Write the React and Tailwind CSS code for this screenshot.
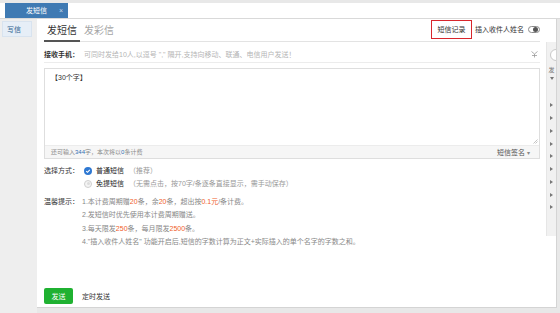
export default function App() {
  const tris = [0, 1, 2, 3, 4, 5, 6, 7, 8];
  return (
    <div className="w-[560px] h-[313px] bg-[#e8e8e8] flex flex-col overflow-hidden font-['Liberation_Sans','Noto_Sans_CJK_SC',sans-serif] text-[#333]">
      <div className="h-[3px] shrink-0" />
      <div className="h-[16px] shrink-0 bg-white flex border-b border-[#d9d9d9]">
        <div className="ml-[5px] w-[63px] bg-[#3f7ab3] flex items-center text-white text-[7px] leading-none">
          <span className="ml-[21px]">发短信</span>
          <span className="ml-[12px] text-[#c6d8ec] text-[7px]">×</span>
        </div>
      </div>
      <div className="flex-1 flex min-h-0">
        <div className="w-[37px] shrink-0 bg-[#eeeeee] pt-[2px] pl-[2px]">
          <div className="w-[30px] h-[16px] bg-[#e6eef7] border border-[#d8e3ef] flex items-center pl-[4px] text-[7px] text-[#2d5e8e] leading-none">写信</div>
        </div>
        <div className="flex-1 flex bg-white border-r border-b border-[#d4d4d4] mb-[5px] mr-[3px] min-w-0">
          <div className="flex-1 flex flex-col pl-[7px] pr-[6px] min-w-0">
            {/* header */}
            <div className="h-[23px] shrink-0 flex justify-between border-b border-[#e3e3e3]">
              <div className="flex items-end">
                <div className="px-[3px] pb-[4px] border-b-2 border-[#555] text-[10px] leading-none text-[#333] -mb-[1px]">发短信</div>
                <div className="ml-[4px] pb-[5px] text-[10px] leading-none text-[#a5a5a5]">发彩信</div>
              </div>
              <div className="flex items-start pt-[1px]">
                <div className="w-[41px] h-[19px] border border-[#d8262c] flex items-center justify-center text-[7px] leading-none text-[#333]">短信记录</div>
                <div className="ml-[3px] h-[19px] flex items-center text-[7px] leading-none text-[#333]">插入收件人姓名</div>
                <div className="ml-[4px] h-[19px] flex items-center">
                  <div className="w-[12px] h-[7px] rounded-full border border-[#8a8a8a] flex items-center justify-end pr-[1px]">
                    <div className="w-[5px] h-[5px] rounded-full bg-[#555]" />
                  </div>
                </div>
              </div>
            </div>
            {/* receiver */}
            <div className="mt-[5px] h-[16px] shrink-0 flex items-center border-b border-[#ececec]">
              <span className="text-[7px] font-bold leading-none text-[#333]">接收手机：</span>
              <span className="ml-[5px] text-[7px] leading-none text-[#b5b5b5]">可同时发给10人,以逗号 "," 隔开,支持向移动、联通、电信用户发送！</span>
              <div className="ml-auto mr-[2px]">
                <svg width="7" height="7" viewBox="0 0 7 7" fill="none" stroke="#9a9a9a" strokeWidth="0.8">
                  <path d="M0.5 0.5 L3.5 3 L6.5 0.5" />
                  <path d="M3.5 3 V6.5" />
                  <path d="M1 4.5 H6" />
                </svg>
              </div>
            </div>
            {/* textarea */}
            <div className="mt-[5px] h-[91px] shrink-0 border border-[#dedede] flex flex-col">
              <div className="flex-1 relative px-[6px] pt-[5px] text-[7px] leading-none text-[#333]">
                【30个字】
                <svg className="absolute right-[1px] bottom-[1px]" width="5" height="5" viewBox="0 0 5 5" stroke="#aaa" strokeWidth="0.7">
                  <path d="M0.5 4.5 L4.5 0.5 M2.5 4.5 L4.5 2.5" />
                </svg>
              </div>
              <div className="h-[13px] bg-[#f6f6f6] border-t border-[#ececec] flex items-center justify-between pl-[6px] pr-[9px]">
                <span className="text-[6px] leading-none text-[#8a8a8a]">还可输入<span className="text-[#2f6fb3]">344</span>字，本次将以<span className="text-[#2f6fb3]">0</span>条计费</span>
                <span className="text-[7px] leading-none text-[#555]">短信签名 <span className="text-[#888] text-[6px]">▾</span></span>
              </div>
            </div>
            {/* select */}
            <div className="mt-[5px] flex shrink-0">
              <div className="w-[40px] h-[13px] flex items-center text-[7px] leading-none text-[#333]">选择方式：</div>
              <div className="flex flex-col">
                <div className="h-[13px] flex items-center">
                  <div className="w-[8px] h-[8px] rounded-full bg-[#2e78d2] flex items-center justify-center">
                    <svg width="6" height="6" viewBox="0 0 6 6" fill="none" stroke="white" strokeWidth="1.1">
                      <path d="M1.2 3.1 L2.5 4.3 L4.8 1.8" />
                    </svg>
                  </div>
                  <span className="ml-[4px] text-[7px] leading-none text-[#222]">普通短信</span>
                  <span className="ml-[5px] text-[7px] leading-none text-[#999]">（推荐）</span>
                </div>
                <div className="h-[13px] flex items-center">
                  <div className="w-[8px] h-[8px] rounded-full border border-[#d0d0d0] bg-[#f4f4f4] flex items-center justify-center">
                    <div className="w-[3px] h-[3px] rounded-full bg-[#dcdcdc]" />
                  </div>
                  <span className="ml-[4px] text-[7px] leading-none text-[#222]">免提短信</span>
                  <span className="ml-[5px] text-[7px] leading-none text-[#999]">（无需点击，按70字/条逐条直接显示，需手动保存）</span>
                </div>
              </div>
            </div>
            {/* tips */}
            <div className="mt-[5px] flex shrink-0 text-[7px] leading-[13.3px]">
              <div className="w-[38px] text-[#333]">温馨提示：</div>
              <div className="flex flex-col text-[#888]">
                <div>1.本计费周期赠<span className="text-[#f0602a]">20</span>条，余<span className="text-[#f0602a]">20</span>条，超出按<span className="text-[#f0602a]">0.1元</span>/条计费。</div>
                <div>2.发短信时优先使用本计费周期赠送。</div>
                <div>3.每天限发<span className="text-[#f0602a]">250</span>条，每月限发<span className="text-[#f0602a]">2500</span>条。</div>
                <div>4."插入收件人姓名" 功能开启后,短信的字数计算为正文+实际插入的单个名字的字数之和。</div>
              </div>
            </div>
            <div className="flex-1" />
            <div className="flex items-center mb-[3px] shrink-0">
              <div className="w-[29px] h-[16px] bg-[#1fb131] rounded-[2px] flex items-center justify-center text-white text-[7px] leading-none">发送</div>
              <span className="ml-[9px] text-[7px] leading-none text-[#333]">定时发送</span>
            </div>
          </div>
          {/* right strip */}
          <div className="w-[10px] shrink-0 flex flex-col">
            <div className="h-[23px]" />
            <div className="h-[194px] bg-[#f1f1f1] border-l border-[#e6e6e6] overflow-hidden flex flex-col items-center">
              <div className="mt-[7px] ml-[8px] w-[12px] h-[12px] shrink-0 rounded-full border border-[#c8c8c8] bg-white" />
              <div className="mt-[6px] text-[6px] leading-none text-[#777]">发</div>
              <svg className="mt-[4px]" width="4" height="3" viewBox="0 0 4 3">
                <path d="M0 0 H4 L2 3 Z" fill="#777" />
              </svg>
              <div className="mt-[19px] flex flex-col items-center">
                {tris.map((i) => (
                  <div key={i} className="h-[12.75px] flex items-center">
                    <svg width="3" height="4" viewBox="0 0 3 4">
                      <path d="M0 0 L3 2 L0 4 Z" fill="#777" />
                    </svg>
                  </div>
                ))}
              </div>
            </div>
          </div>
        </div>
      </div>
    </div>
  );
}
